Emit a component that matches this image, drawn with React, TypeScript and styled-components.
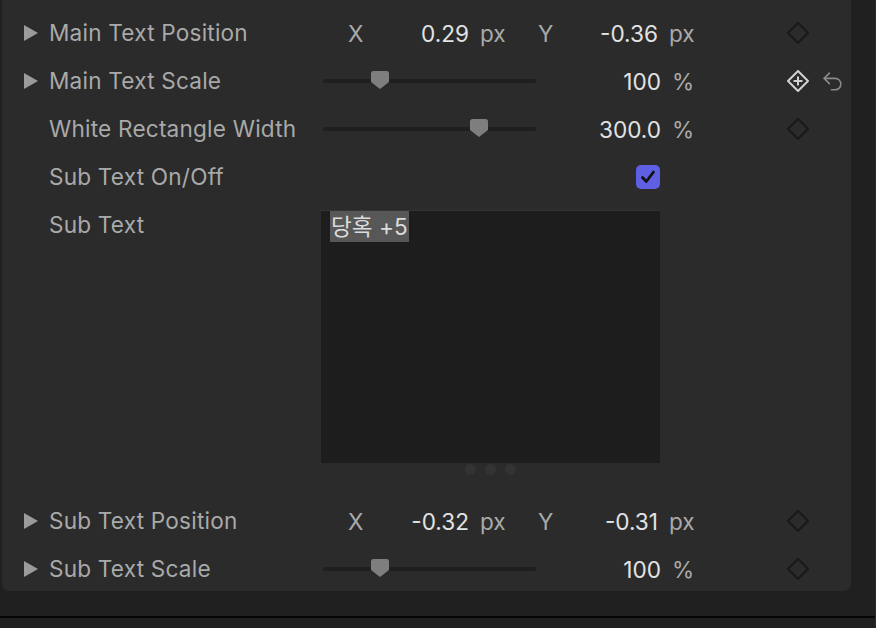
import React, { FunctionComponent } from 'react'
import styled, { createGlobalStyle } from 'styled-components'
import { Undo2 } from 'lucide-react'

const GlobalStyle = createGlobalStyle`
  html, body {
    margin: 0;
    padding: 0;
    background: #202020;
    overflow: hidden;
  }
  body {
    font-family: Inter, "Noto Sans CJK KR", sans-serif;
  }
`

const Page = styled.div`
  width: 876px;
  height: 628px;
  display: flex;
  flex-direction: column;
  background: #202020;
  border-right: 1px solid #2a2a2a;
  box-sizing: border-box;
`

const Panel = styled.div`
  margin: 0 24px 0 2px;
  padding-top: 9px;
  background: #2b2b2b;
  border-radius: 0 0 7px 7px;
  display: flex;
  flex-direction: column;
`

const Footer = styled.div`
  flex: 1;
  display: flex;
  flex-direction: column;
  justify-content: flex-end;
`

const FooterLine = styled.div`
  height: 2px;
  background: #050505;
  margin-bottom: 10px;
`

const Row = styled.div<{ $tall?: boolean, $last?: boolean }>`
  display: grid;
  grid-template-columns: 47px 274px 380px 75px 40px 28px;
  align-items: ${p => (p.$tall ? 'start' : 'center')};
  height: ${p => (p.$tall ? '296px' : p.$last ? '46px' : '48px')};
`

const Toggle = styled.div`
  display: flex;
  padding-left: 21px;
`

const Label = styled.div`
  font-size: 22.6px;
  letter-spacing: 0.2px;
  color: #a9a9a9;
  white-space: nowrap;
  line-height: 48px;
`

const Controls = styled.div`
  display: flex;
  align-items: center;
`

const Group = styled.div`
  display: flex;
  align-items: center;
  width: 193px;
`

const Axis = styled.div`
  width: 46px;
  padding-left: 25px;
  box-sizing: border-box;
  font-size: 22.6px;
  color: #a9a9a9;
`

const Value = styled.div<{ $width: number }>`
  width: ${p => p.$width}px;
  text-align: right;
  font-size: 22.6px;
  color: #e2e2e2;
`

const Unit = styled.div`
  margin-left: 11px;
  font-size: 22.6px;
  color: #a9a9a9;
`

const Track = styled.div`
  position: relative;
  width: 213px;
  height: 4px;
  border-radius: 2px;
  background: #1f1f1f;
`

const Thumb = styled.svg`
  position: absolute;
  top: -9px;
  margin-left: -10px;
`

const Check = styled.div`
  margin-left: 313px;
  width: 24px;
  height: 24px;
  border-radius: 5px;
  background: #5f5fe4;
  display: flex;
  align-items: center;
  justify-content: center;
`

const Editor = styled.div`
  display: flex;
  flex-direction: column;
  align-items: center;
  margin-left: -2px;
  padding-top: 9px;
  width: 339px;
`

const TextArea = styled.div`
  width: 339px;
  height: 253px;
  box-sizing: border-box;
  background: #1d1d1d;
  border-top: 1px solid #343434;
  padding: 0 0 0 9px;
`

const Selected = styled.span`
  display: inline-block;
  background: #575757;
  color: #dcdcdc;
  font-size: 22.6px;
  line-height: 31px;
  padding: 0 1px;
`

const Dots = styled.div`
  display: flex;
  gap: 9px;
  margin-top: 1px;
`

const Dot = styled.div`
  width: 11px;
  height: 11px;
  border-radius: 50%;
  background: #333333;
`

const IconCell = styled.div`
  display: flex;
  justify-content: center;
  align-items: center;
`

const Triangle: FunctionComponent = () => (
  <svg width='16' height='18' viewBox='0 0 16 18'>
    <path d='M1 1 L15 9 L1 17 Z' fill='#9b9b9b' />
  </svg>
)

const Diamond: FunctionComponent<{ active?: boolean }> = ({ active }) => (
  <svg width='24' height='24' viewBox='0 0 24 24'>
    <path
      d='M12 2 L22 12 L12 22 L2 12 Z'
      fill='none'
      stroke={active ? '#d2d2d2' : '#191919'}
      strokeWidth='2'
      strokeLinejoin='round'
    />
    {active && <path d='M12 7.5 V16.5 M7.5 12 H16.5' stroke='#d2d2d2' strokeWidth='2' />}
  </svg>
)

const Slider: FunctionComponent<{ at: number }> = ({ at }) => (
  <Track>
    <Thumb width='20' height='20' viewBox='0 0 20 20' style={{ left: at }}>
      <path d='M3.5 1 H16.5 Q19 1 19 3.5 V12 L10 19 L1 12 V3.5 Q1 1 3.5 1 Z' fill='#7e7e7e' />
    </Thumb>
  </Track>
)

const Position: FunctionComponent<{ x: string, y: string }> = ({ x, y }) => (
  <Controls>
    <Group>
      <Axis>X</Axis>
      <Value $width={100}>{x}</Value>
      <Unit>px</Unit>
    </Group>
    <Group>
      <Axis>Y</Axis>
      <Value $width={99}>{y}</Value>
      <Unit>px</Unit>
    </Group>
  </Controls>
)

const Scale: FunctionComponent<{ at: number, value: string }> = ({ at, value }) => (
  <Controls>
    <Slider at={at} />
    <Value $width={125}>{value}</Value>
    <Unit>%</Unit>
  </Controls>
)

export default function App () {
  return (
    <Page>
      <GlobalStyle />
      <Panel>
        <Row>
          <Toggle><Triangle /></Toggle>
          <Label>Main Text Position</Label>
          <Position x='0.29' y='-0.36' />
          <span />
          <IconCell><Diamond /></IconCell>
        </Row>
        <Row>
          <Toggle><Triangle /></Toggle>
          <Label>Main Text Scale</Label>
          <Scale at={57} value='100' />
          <span />
          <IconCell><Diamond active /></IconCell>
          <IconCell><Undo2 size={25} color='#8a8a8a' strokeWidth={1.5} /></IconCell>
        </Row>
        <Row>
          <span />
          <Label>White Rectangle Width</Label>
          <Scale at={156} value='300.0' />
          <span />
          <IconCell><Diamond /></IconCell>
        </Row>
        <Row>
          <span />
          <Label>Sub Text On/Off</Label>
          <Controls>
            <Check>
              <svg width='16' height='16' viewBox='0 0 16 16'>
                <path d='M2.5 8.5 L6.3 12.5 L13.5 3' fill='none' stroke='#111' strokeWidth='2.8' strokeLinecap='round' strokeLinejoin='round' />
              </svg>
            </Check>
          </Controls>
        </Row>
        <Row $tall>
          <span />
          <Label>Sub Text</Label>
          <Editor>
            <TextArea>
              <Selected>당혹 +5</Selected>
            </TextArea>
            <Dots>
              <Dot />
              <Dot />
              <Dot />
            </Dots>
          </Editor>
        </Row>
        <Row>
          <Toggle><Triangle /></Toggle>
          <Label>Sub Text Position</Label>
          <Position x='-0.32' y='-0.31' />
          <span />
          <IconCell><Diamond /></IconCell>
        </Row>
        <Row $last>
          <Toggle><Triangle /></Toggle>
          <Label>Sub Text Scale</Label>
          <Scale at={57} value='100' />
          <span />
          <IconCell><Diamond /></IconCell>
        </Row>
      </Panel>
      <Footer>
        <FooterLine />
      </Footer>
    </Page>
  )
}
